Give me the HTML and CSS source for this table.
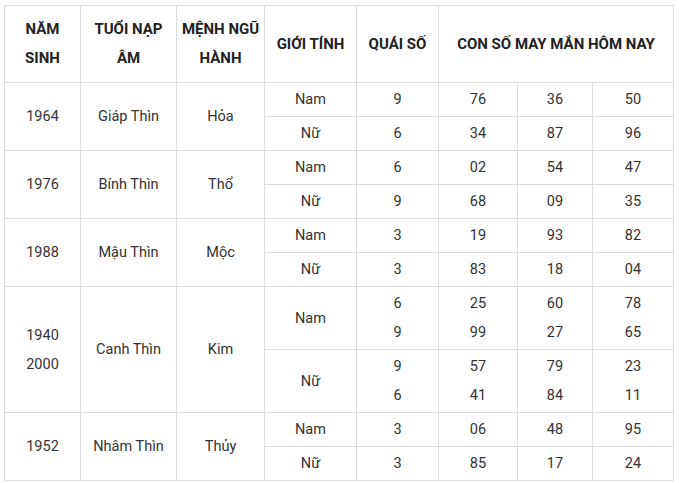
FILE: index.html
```html
<!DOCTYPE html>
<html lang="vi">
<head>
<meta charset="utf-8">
<link rel="stylesheet" href="styles.css">
</head>
<body>
<div class="wrap">
<table class="lucky">
<colgroup>
<col class="c1"><col class="c2"><col class="c3"><col class="c4"><col class="c5"><col class="c6"><col class="c7"><col class="c8">
</colgroup>
<thead>
<tr>
<th>NĂM<br>SINH</th>
<th>TUỔI NẠP<br>ÂM</th>
<th>MỆNH NGŨ<br>HÀNH</th>
<th>GIỚI TÍNH</th>
<th>QUÁI SỐ</th>
<th colspan="3">CON SỐ MAY MẮN HÔM NAY</th>
</tr>
</thead>
<tbody>
<tr><td rowspan="2">1964</td><td rowspan="2">Giáp Thìn</td><td rowspan="2">Hỏa</td><td>Nam</td><td>9</td><td>76</td><td>36</td><td>50</td></tr>
<tr><td>Nữ</td><td>6</td><td>34</td><td>87</td><td>96</td></tr>
<tr><td rowspan="2">1976</td><td rowspan="2">Bính Thìn</td><td rowspan="2">Thổ</td><td>Nam</td><td>6</td><td>02</td><td>54</td><td>47</td></tr>
<tr><td>Nữ</td><td>9</td><td>68</td><td>09</td><td>35</td></tr>
<tr><td rowspan="2">1988</td><td rowspan="2">Mậu Thìn</td><td rowspan="2">Mộc</td><td>Nam</td><td>3</td><td>19</td><td>93</td><td>82</td></tr>
<tr><td>Nữ</td><td>3</td><td>83</td><td>18</td><td>04</td></tr>
<tr><td rowspan="2">1940<br>2000</td><td rowspan="2">Canh Thìn</td><td rowspan="2">Kim</td><td>Nam</td><td>6<br>9</td><td>25<br>99</td><td>60<br>27</td><td>78<br>65</td></tr>
<tr><td>Nữ</td><td>9<br>6</td><td>57<br>41</td><td>79<br>84</td><td>23<br>11</td></tr>
<tr><td rowspan="2">1952</td><td rowspan="2">Nhâm Thìn</td><td rowspan="2">Thủy</td><td>Nam</td><td>3</td><td>06</td><td>48</td><td>95</td></tr>
<tr><td>Nữ</td><td>3</td><td>85</td><td>17</td><td>24</td></tr>
</tbody>
</table>
</div>
</body>
</html>
```
FILE: styles.css
```css
html, body {
  margin: 0;
  padding: 0;
  background: #fff;
}
.wrap {
  padding: 5px 0 0 4px;
}
.lucky {
  border-collapse: collapse;
  table-layout: fixed;
  width: 669px;
  font-family: Roboto, "Liberation Sans", sans-serif;
  font-size: 14.5px;
  color: #333;
}
.c1 { width: 76px; }
.c2 { width: 96px; }
.c3 { width: 88px; }
.c4 { width: 92px; }
.c5 { width: 82px; }
.c6 { width: 79px; }
.c7 { width: 75px; }
.c8 { width: 81px; }
.lucky th,
.lucky td {
  border: 1px solid #dcdcdc;
  text-align: center;
  vertical-align: middle;
  line-height: 29px;
}
.lucky th {
  font-size: 15px;
  font-weight: bold;
  color: #222;
  padding: 9px 2px;
}
.lucky td {
  padding: 2px 2px;
}
```
